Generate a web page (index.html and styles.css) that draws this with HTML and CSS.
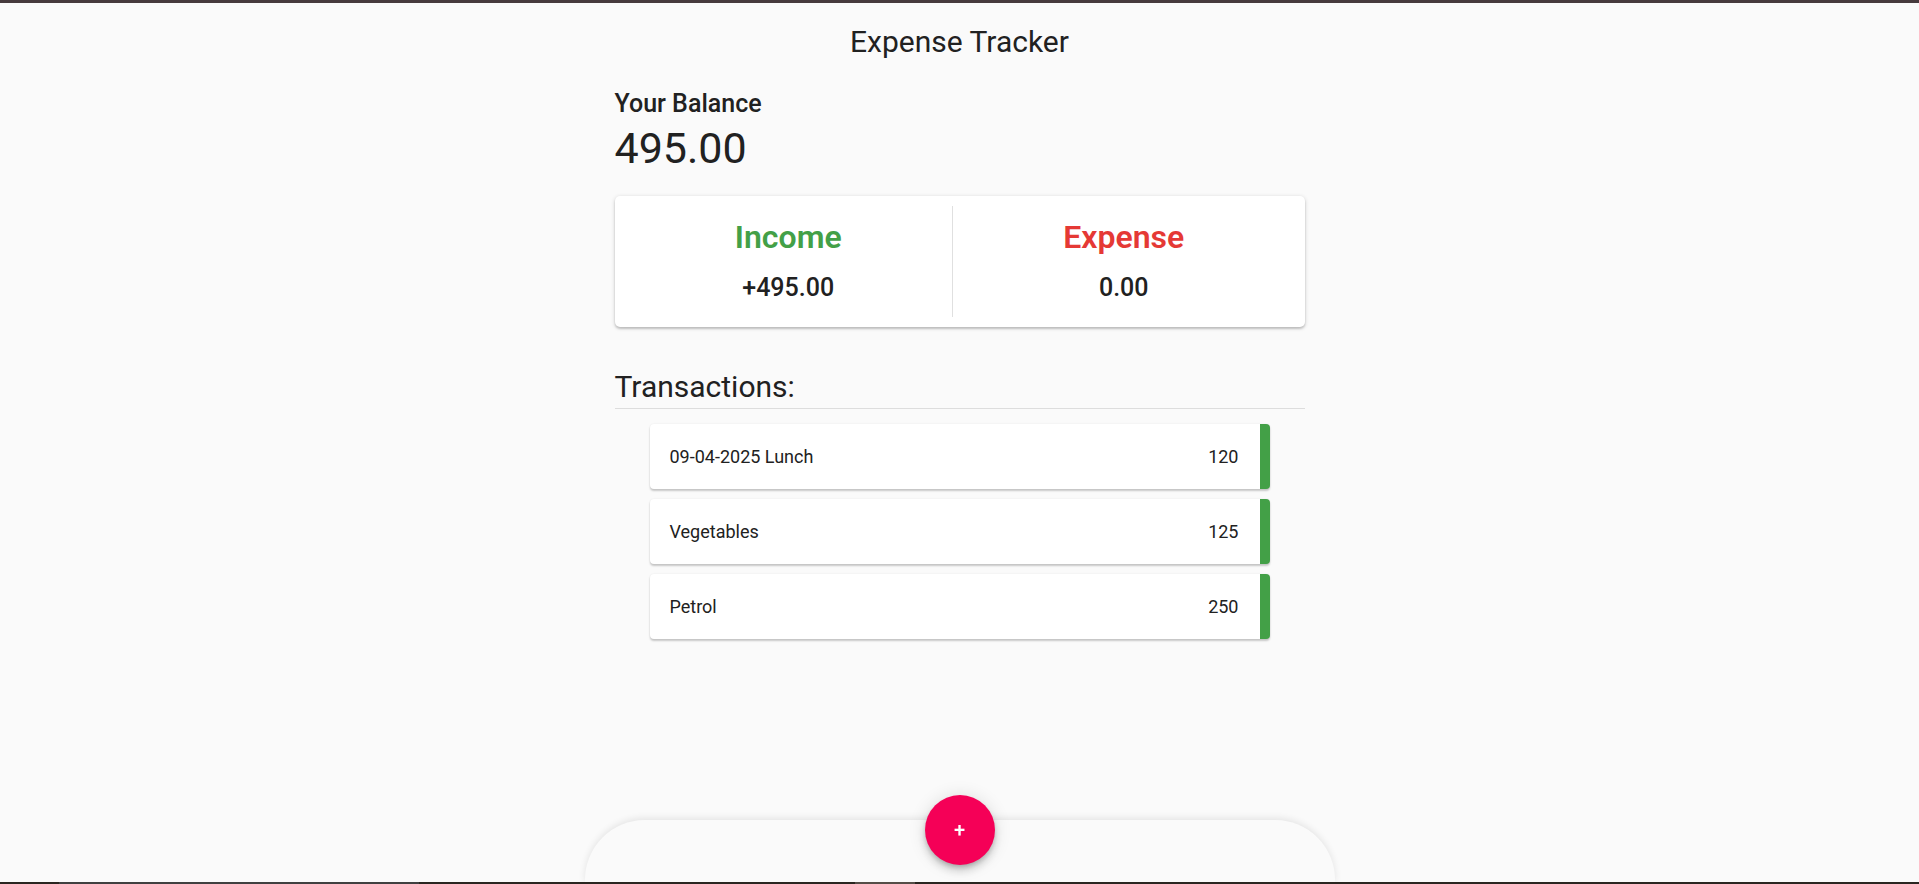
FILE: index.html
```html
<!DOCTYPE html>
<html lang="en">
<head>
    <meta charset="UTF-8">
    <meta name="viewport" content="width=device-width, initial-scale=1.0">
    <title>Expense Tracker</title>
    <link rel="stylesheet" href="styles.css">
</head>
<body>
    <div class="topline"></div>
    <header class="toolbar">
        <h1 class="title">Expense Tracker</h1>
    </header>
    <main class="container">
        <h4 class="balance-label">Your Balance</h4>
        <h1 class="balance-value" id="balance">0.00</h1>

        <div class="summary-card">
            <div class="summary-col">
                <h4 class="summary-label income">Income</h4>
                <p class="summary-value" id="income">+0.00</p>
            </div>
            <div class="summary-col">
                <h4 class="summary-label expense">Expense</h4>
                <p class="summary-value" id="expense">0.00</p>
            </div>
        </div>

        <h3 class="section-title">Transactions:</h3>
        <ul class="tx-list" id="txList">
            <!-- Transactions are rendered below -->
        </ul>
    </main>

    <nav class="bottom-bar"></nav>
    <button type="button" class="fab">+</button>
    <div class="taskbar-edge"></div>

    <script>
        // Transaction data
        const transactions = [
            { text: "09-04-2025 Lunch", amount: 120 },
            { text: "Vegetables", amount: 125 },
            { text: "Petrol", amount: 250 },
        ];

        const txList = document.getElementById("txList");
        function renderList() {
            txList.innerHTML = "";
            transactions.forEach((tx) => {
                const item = document.createElement("li");
                item.className = "tx-item plus";
                item.innerHTML = `
                    <span>${tx.text}</span>
                    <span>${tx.amount}</span>
                `;
                txList.appendChild(item);
            });
        }

        // Totals
        function updateTotals() {
            const income = transactions.reduce((sum, tx) => sum + tx.amount, 0);
            const expense = 0;
            document.getElementById("balance").textContent = (income - expense).toFixed(2);
            document.getElementById("income").textContent = "+" + income.toFixed(2);
            document.getElementById("expense").textContent = expense.toFixed(2);
        }

        renderList();
        updateTotals();
    </script>
</body>
</html>
```

FILE: styles.css
```css
body {
    margin: 0;
    padding: 0;
    background-color: #fafafa;
    font-family: Roboto, "Noto Sans", Arial, sans-serif;
    color: #212121;
}
.topline {
    height: 3px;
    background: #463a3d;
}
.toolbar {
    text-align: center;
}
.title {
    margin: 21px 0 0;
    font-size: 30px;
    font-weight: 400;
    line-height: 36px;
}
.container {
    width: 690px;
    margin: 0 auto;
    padding-bottom: 60px;
}
.balance-label {
    margin: 30px 0 0;
    font-size: 25px;
    font-weight: 500;
    line-height: 28px;
}
.balance-value {
    margin: 4px 0 0;
    font-size: 43px;
    font-weight: 400;
    line-height: 52px;
}
.summary-card {
    display: flex;
    margin-top: 22px;
    padding: 10px;
    background: #ffffff;
    border-radius: 5px;
    box-shadow: 0 2px 2px rgba(0, 0, 0, 0.14), 0 1px 4px rgba(0, 0, 0, 0.18);
}
.summary-col {
    flex: 1 1 auto;
    padding: 13px 0 15px;
    text-align: center;
}
.summary-col:first-child {
    border-right: 1px solid #e0e0e0;
}
.summary-label {
    margin: 0 0 19px;
    font-size: 32px;
    font-weight: 600;
    line-height: 36px;
}
.income {
    color: #43a047;
}
.expense {
    color: #e53935;
}
.summary-value {
    margin: 0;
    font-size: 25px;
    font-weight: 500;
    line-height: 28px;
}
.section-title {
    margin: 42px 0 0;
    padding-bottom: 3px;
    font-size: 30px;
    font-weight: 400;
    line-height: 36px;
    border-bottom: 1px solid #dddddd;
}
.tx-list {
    list-style: none;
    margin: 15px 35px 0;
    padding: 0;
    display: flex;
    flex-direction: column;
    gap: 10px;
}
.tx-item {
    display: flex;
    justify-content: space-between;
    align-items: center;
    height: 65px;
    padding: 0 21px 0 20px;
    background: #ffffff;
    border-radius: 4px;
    font-size: 18px;
    box-shadow: 0 2px 2px rgba(0, 0, 0, 0.2), 0 0 2px rgba(0, 0, 0, 0.08);
}
.tx-item.plus {
    border-right: 10px solid #43a047;
}
.tx-item.minus {
    border-right: 10px solid #e53935;
}
.bottom-bar {
    position: fixed;
    left: 50%;
    bottom: 0;
    width: 750px;
    height: 64px;
    margin-left: -375px;
    background: #fafafa;
    border-radius: 60px 60px 0 0;
    box-shadow: 0 -2px 7px rgba(0, 0, 0, 0.09);
}
.fab {
    position: fixed;
    left: 50%;
    top: 795px;
    width: 70px;
    height: 70px;
    margin-left: -35px;
    border: none;
    border-radius: 50%;
    background: #f50057;
    color: #ffffff;
    font-family: Roboto, Arial, sans-serif;
    font-size: 20px;
    font-weight: 500;
    line-height: 1;
    padding: 0;
    cursor: pointer;
    box-shadow: 0 3px 5px -1px rgba(0, 0, 0, 0.2), 0 6px 10px rgba(0, 0, 0, 0.14), 0 1px 18px rgba(0, 0, 0, 0.12);
}
.taskbar-edge {
    position: fixed;
    left: 0;
    right: 0;
    bottom: 0;
    height: 2px;
    background: linear-gradient(to right, #2a2620 59px, #404040 59px, #404040 419px, #2a2620 419px, #2a2620 855px, #554d47 855px, #554d47 915px, #2a2620 915px);
}
```
